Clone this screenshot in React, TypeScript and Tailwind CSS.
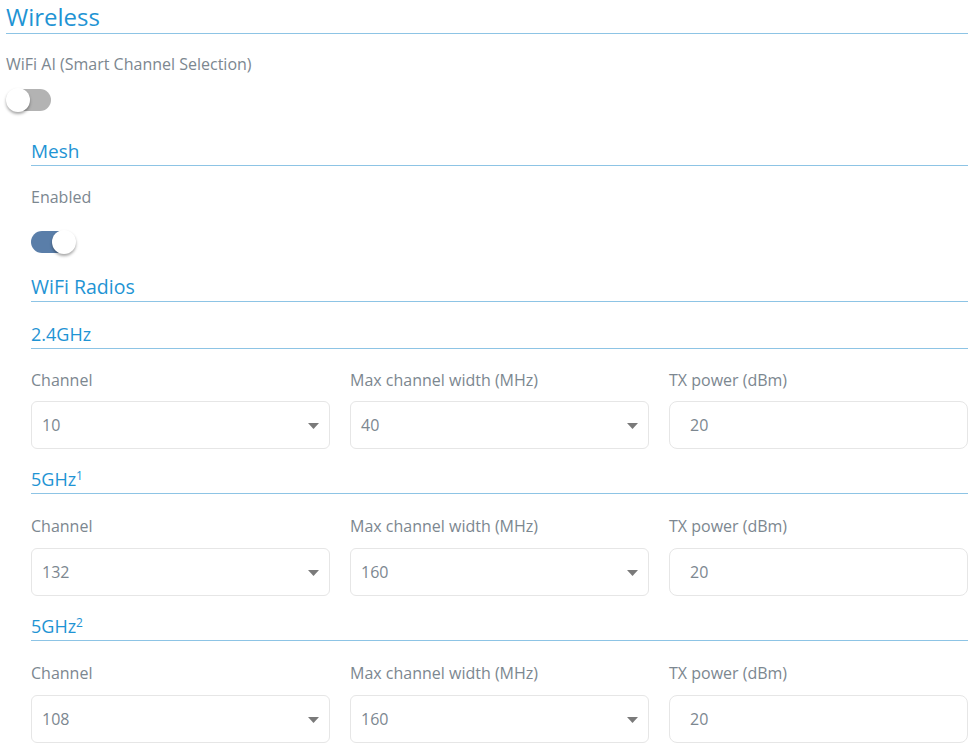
import { useState } from "react";

const FONT = { fontFamily: '"Open Sans", "Noto Sans", sans-serif' };

function Toggle({ on }: { on: boolean }) {
  const [checked, setChecked] = useState(on);
  return (
    <button
      type="button"
      onClick={() => setChecked((v) => !v)}
      className={`relative h-[22px] w-[44px] rounded-full ${checked ? "bg-[#5a7ea9]" : "bg-[#b3b3b3]"}`}
    >
      <span
        className={`absolute top-[-1px] h-[24px] w-[24px] rounded-full bg-white shadow-[0_2px_3px_rgba(0,0,0,0.35)] ${
          checked ? "left-[21px]" : "left-[-1px]"
        }`}
      />
    </button>
  );
}

function SectionTitle({ children }: { children: React.ReactNode }) {
  return (
    <div className="border-b border-[#8dc4e5] pb-[2px] text-[18px] leading-[24px] text-[#1f94d4]">{children}</div>
  );
}

function SelectBox({ value }: { value: string }) {
  return (
    <div className="flex h-[48px] items-center justify-between rounded-[6px] border border-[#e6e6e6] bg-white pl-[10px] pr-[10px] text-[16px] text-[#7c8790]">
      <span>{value}</span>
      <svg width="11" height="6" viewBox="0 0 11 6" className="mt-[2px]">
        <path d="M0 0h11L5.5 6z" fill="#7a7a7a" />
      </svg>
    </div>
  );
}

function RadioRow({ channel, width, tall }: { channel: string; width: string; tall?: boolean }) {
  return (
    <div className={`grid grid-cols-3 gap-x-[20px] ${tall ? "pt-[21px]" : "pt-[20px]"}`}>
      {[
        { label: "Channel", field: <SelectBox value={channel} /> },
        { label: "Max channel width (MHz)", field: <SelectBox value={width} /> },
        {
          label: "TX power (dBm)",
          field: (
            <div className="flex h-[48px] items-center rounded-[8px] border border-[#e6e6e6] bg-white pl-[20px] text-[16px] text-[#7c8790]">
              20
            </div>
          ),
        },
      ].map((c) => (
        <div key={c.label}>
          <div className={`text-[16px] leading-[22px] text-[#7c8790] ${tall ? "mb-[11px]" : "mb-[10px]"}`}>{c.label}</div>
          {c.field}
        </div>
      ))}
    </div>
  );
}

export default function App() {
  return (
    <div style={FONT} className="min-h-[753px] w-full bg-white px-[6px] pt-[1px]">
      <div className="border-b border-[#8dc4e5] pb-[1px] text-[24px] leading-[31px] text-[#1f94d4]">Wireless</div>
      <div className="mt-[19px] text-[16px] leading-[22px] text-[#7c8790]">WiFi AI (Smart Channel Selection)</div>
      <div className="mt-[14px] flex pl-[1px]">
        <Toggle on={false} />
      </div>

      <div className="ml-[25px] mt-[27px]">
        <div className="border-b border-[#8dc4e5] pb-[1px] text-[19px] leading-[26px] text-[#1f94d4]">Mesh</div>
        <div className="mt-[20px] text-[16px] leading-[22px] text-[#7c8790]">Enabled</div>
        <div className="mt-[23px] flex">
          <Toggle on={true} />
        </div>

        <div className="mt-[21px] border-b border-[#8dc4e5] pb-[1px] text-[19.5px] leading-[26px] text-[#1f94d4]">
          WiFi Radios
        </div>

        <div className="mt-[20px]">
          <SectionTitle>2.4GHz</SectionTitle>
          <RadioRow channel="10" width="40" />
        </div>
        <div className="mt-[18px]">
          <SectionTitle>
            5GHz<sup className="text-[12px]">1</sup>
          </SectionTitle>
          <RadioRow channel="132" width="160" tall />
        </div>
        <div className="mt-[18px]">
          <SectionTitle>
            5GHz<sup className="text-[12px]">2</sup>
          </SectionTitle>
          <RadioRow channel="108" width="160" tall />
        </div>
      </div>
    </div>
  );
}
